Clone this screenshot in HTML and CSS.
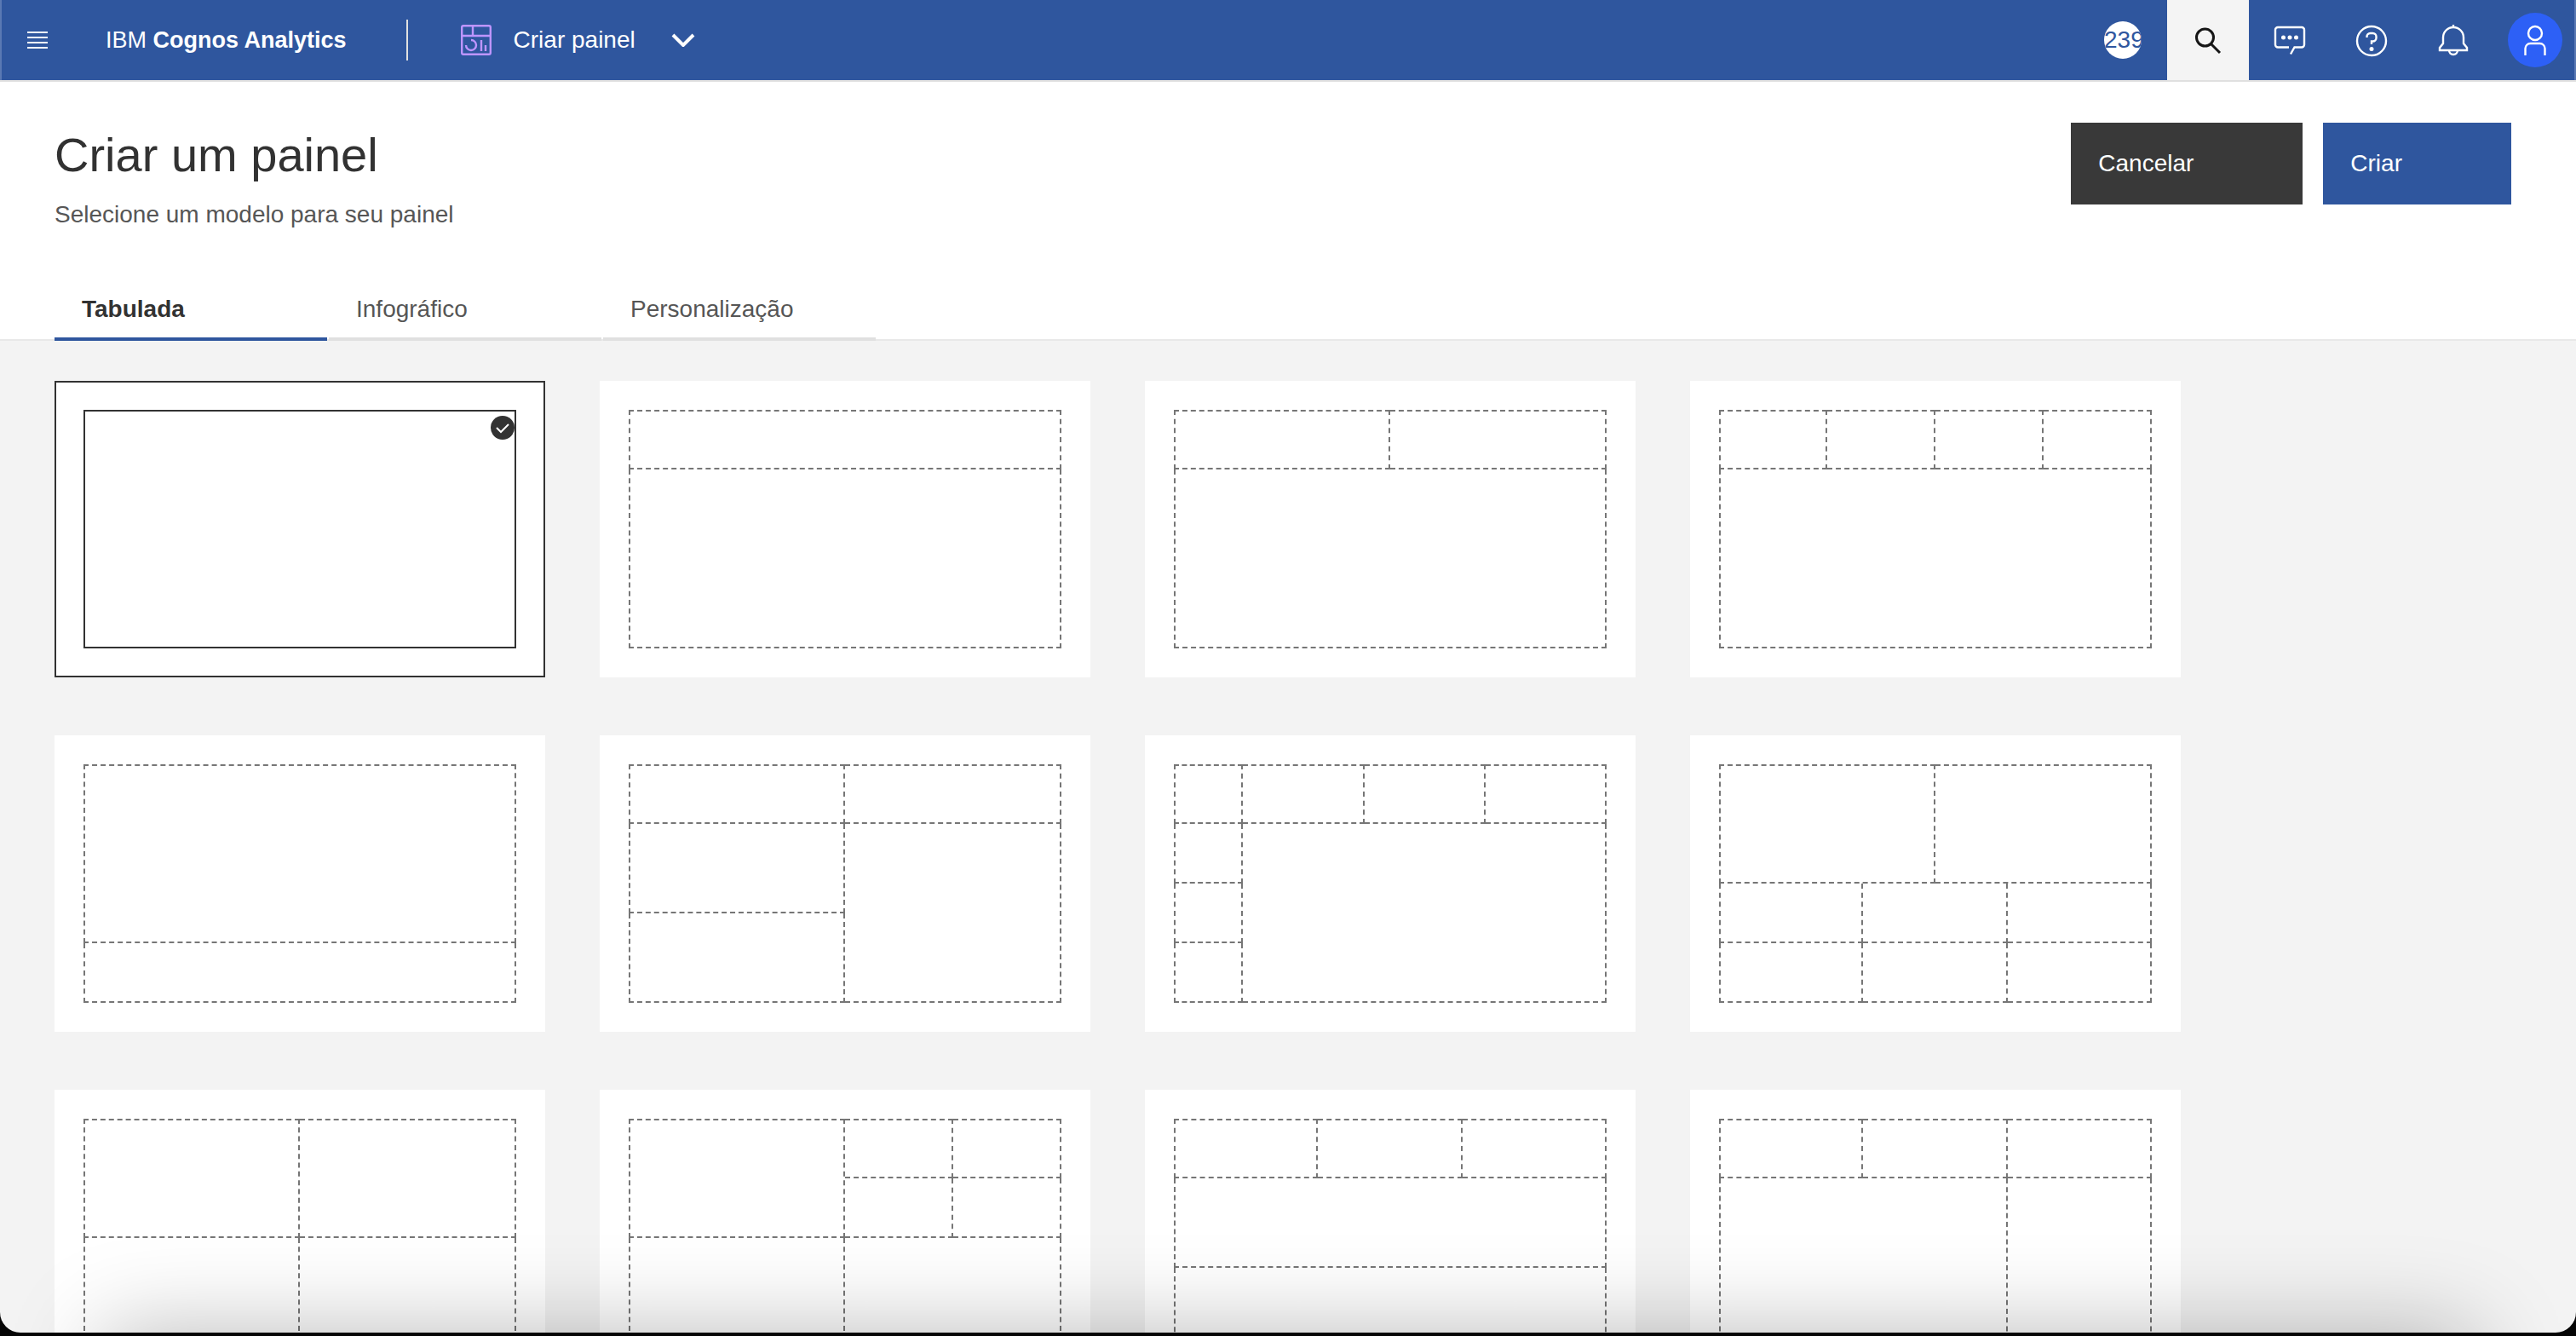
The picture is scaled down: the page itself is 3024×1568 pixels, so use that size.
FILE: index.html
```html
<!DOCTYPE html>
<html lang="pt-BR">
<head>
<meta charset="utf-8">
<title>IBM Cognos Analytics</title>
<link rel="stylesheet" href="styles.css">
</head>
<body>
<div class="window">
  <header class="topbar">
    <button class="menu-button" type="button" aria-label="Menu">
      <svg class="icon-menu" viewBox="0 0 24 20" aria-hidden="true"><path d="M0 1h24M0 7h24M0 13h24M0 19h24"/></svg>
    </button>
    <a class="brand" href="#">IBM <b>Cognos Analytics</b></a>
    <button class="switcher" type="button">
      <svg class="icon-dashboard" viewBox="0 0 36 36" stroke-width="2.4" aria-hidden="true"><path d="M3 1.200h30a1.800 1.800 0 0 1 1.800 1.800v30a1.800 1.800 0 0 1-1.800 1.800H3a1.800 1.800 0 0 1-1.800-1.800V3A1.800 1.800 0 0 1 3 1.200zM1 13h34M14 1v12M6 24a6 6 0 1 0 6-6M24 18v13M29 24v7"/></svg>
      <span>Criar painel</span>
      <svg class="icon-chevron" viewBox="0 0 28 16" aria-hidden="true"><path d="M2 2l12 12L26 2"/></svg>
    </button>
    <div class="actions">
      <span class="badge">239</span>
      <button class="action action-search" type="button" aria-label="Pesquisar">
        <svg class="icon" viewBox="0 0 40 40" stroke-width="3" aria-hidden="true"><circle cx="16.500" cy="17" r="10"/><path d="M23.500 24.500L34 35"/></svg>
      </button>
      <button class="action" type="button" aria-label="Comentários">
        <svg class="icon" viewBox="0 0 40 40" stroke-width="2.4" aria-hidden="true"><path d="M19 28.500H6a3 3 0 0 1-3-3V8a3 3 0 0 1 3-3h28a3 3 0 0 1 3 3v17.500a3 3 0 0 1-3 3h-8.500l-4.500 8"/><path class="dots" d="M12.500 17h0M20 17h0M27.500 17h0"/></svg>
      </button>
      <button class="action" type="button" aria-label="Ajuda">
        <svg class="icon" viewBox="0 0 40 40" stroke-width="2.4" aria-hidden="true"><circle cx="20" cy="21" r="17"/><path d="M14.500 17v-1a4 4 0 0 1 4-4h3a4 4 0 0 1 4 4v1.500a4 4 0 0 1-4 4H20V25"/><path class="dots" d="M20 30.500h0"/></svg>
      </button>
      <button class="action" type="button" aria-label="Notificações">
        <svg class="icon" viewBox="0 0 40 40" stroke-width="2.4" aria-hidden="true"><path d="M20 2v4M20 5a12 12 0 0 1 12 12v7l4 5v3H4v-3l4-5v-7A12 12 0 0 1 20 5zM15 32a5 5 0 0 0 10 0"/></svg>
      </button>
      <button class="action" type="button" aria-label="Conta">
        <span class="avatar"><svg class="icon" viewBox="0 0 40 40" stroke-width="2.4" aria-hidden="true"><circle cx="20" cy="12" r="8"/><path d="M8.500 38v-8a6 6 0 0 1 6-6h11a6 6 0 0 1 6 6v8"/></svg></span>
      </button>
    </div>
  </header>

  <section class="intro">
    <div class="intro-row">
      <div class="intro-text">
        <h1>Criar um painel</h1>
        <p>Selecione um modelo para seu painel</p>
      </div>
      <div class="buttons">
        <button class="button button-secondary" type="button">Cancelar</button>
        <button class="button button-primary" type="button">Criar</button>
      </div>
    </div>
    <div class="tabs" role="tablist">
      <button class="tab tab-active" type="button" role="tab" aria-selected="true">Tabulada</button>
      <button class="tab" type="button" role="tab" aria-selected="false">Infográfico</button>
      <button class="tab" type="button" role="tab" aria-selected="false">Personalização</button>
    </div>
  </section>

  <main class="templates">
    <label class="card">
      <input class="card-input" type="radio" name="template" aria-label="Modelo 1" checked>
      <span class="preview"><i class="c12 r8 top left"></i></span>
      <svg class="check" viewBox="0 0 28 28" aria-hidden="true"><circle cx="14" cy="14" r="14"/><path d="M7 14l5 5 9-9"/></svg>
    </label>
    <label class="card">
      <input class="card-input" type="radio" name="template" aria-label="Modelo 2">
      <span class="preview"><i class="c12 r2 top left"></i><i class="c12 r6 left"></i></span>
    </label>
    <label class="card">
      <input class="card-input" type="radio" name="template" aria-label="Modelo 3">
      <span class="preview"><i class="c6 r2 top left"></i><i class="c6 r2 top"></i><i class="c12 r6 left"></i></span>
    </label>
    <label class="card">
      <input class="card-input" type="radio" name="template" aria-label="Modelo 4">
      <span class="preview"><i class="c3 r2 top left"></i><i class="c3 r2 top"></i><i class="c3 r2 top"></i><i class="c3 r2 top"></i><i class="c12 r6 left"></i></span>
    </label>
    <label class="card">
      <input class="card-input" type="radio" name="template" aria-label="Modelo 5">
      <span class="preview"><i class="c12 r6 top left"></i><i class="c12 r2 left"></i></span>
    </label>
    <label class="card">
      <input class="card-input" type="radio" name="template" aria-label="Modelo 6">
      <span class="preview"><i class="c6 r2 top left"></i><i class="c6 r2 top"></i><i class="c6 r3 left"></i><i class="c6 r6"></i><i class="c6 r3 left"></i></span>
    </label>
    <label class="card">
      <input class="card-input" type="radio" name="template" aria-label="Modelo 7">
      <span class="preview preview-25"><i class="c4 r2 top left"></i><i class="c7 r2 top"></i><i class="c7 r2 top"></i><i class="c7 r2 top"></i><i class="c4 r2 left"></i><i class="c21 r6"></i><i class="c4 r2 left"></i><i class="c4 r2 left"></i></span>
    </label>
    <label class="card">
      <input class="card-input" type="radio" name="template" aria-label="Modelo 8">
      <span class="preview"><i class="c6 r4 top left"></i><i class="c6 r4 top"></i><i class="c4 r2 left"></i><i class="c4 r2"></i><i class="c4 r2"></i><i class="c4 r2 left"></i><i class="c4 r2"></i><i class="c4 r2"></i></span>
    </label>
    <label class="card">
      <input class="card-input" type="radio" name="template" aria-label="Modelo 9">
      <span class="preview"><i class="c6 r4 top left"></i><i class="c6 r4 top"></i><i class="c6 r4 left"></i><i class="c6 r4"></i></span>
    </label>
    <label class="card">
      <input class="card-input" type="radio" name="template" aria-label="Modelo 10">
      <span class="preview"><i class="c6 r4 top left"></i><i class="c3 r2 top"></i><i class="c3 r2 top"></i><i class="c3 r2"></i><i class="c3 r2"></i><i class="c6 r4 left"></i><i class="c6 r4"></i></span>
    </label>
    <label class="card">
      <input class="card-input" type="radio" name="template" aria-label="Modelo 11">
      <span class="preview"><i class="c4 r2 top left"></i><i class="c4 r2 top"></i><i class="c4 r2 top"></i><i class="c12 r3 left"></i><i class="c12 r3 left"></i></span>
    </label>
    <label class="card">
      <input class="card-input" type="radio" name="template" aria-label="Modelo 12">
      <span class="preview"><i class="c4 r2 top left"></i><i class="c4 r2 top"></i><i class="c4 r2 top"></i><i class="c8 r6 left"></i><i class="c4 r6"></i></span>
    </label>
  </main>
  <div class="dock-shadow" aria-hidden="true"></div>
</div>
</body>
</html>
```
FILE: styles.css
```css
* {
  box-sizing: border-box;
}

body {
  margin: 0;
  height: 100vh;
  padding-bottom: 4px;
  overflow: hidden;
  background: #050505;
  color: #565656;
  font: 28px/36px "Liberation Sans", Arial, sans-serif;
}

button {
  margin: 0;
  padding: 0;
  border: 0;
  background: none;
  color: inherit;
  font: inherit;
  text-align: left;
  cursor: pointer;
}

.window {
  position: relative;
  display: flex;
  flex-direction: column;
  height: 100%;
  overflow: hidden;
  border-radius: 0 0 24px 24px;
  background: #f3f3f3;
}

/* Top bar */
.topbar {
  display: flex;
  flex: none;
  align-items: center;
  height: 96px;
  border-bottom: 2px solid #e0e0e0;
  background: #2f569e;
  box-shadow: inset 2px 0 #5a79b3, inset -2px 0 #5a79b3;
  color: #fff;
}

.menu-button {
  display: flex;
  padding: 32px;
}

.icon-menu {
  width: 24px;
  height: 20px;
  stroke: #fff;
  stroke-width: 2;
}

.brand {
  margin-left: 36px;
  color: inherit;
  font-size: 27px;
  text-decoration: none;
}

.switcher {
  display: flex;
  align-items: center;
  gap: 26px;
  height: 48px;
  margin-left: 70px;
  padding-left: 62px;
  border-left: 2px solid #e0e0e0;
}

.icon-dashboard {
  width: 36px;
  height: 36px;
  fill: none;
  stroke: #be95ff;
}

.icon-chevron {
  width: 28px;
  height: 16px;
  margin-left: 16px;
  fill: none;
  stroke: #fff;
  stroke-width: 4;
}

.actions {
  display: flex;
  align-items: center;
  margin-left: auto;
}

.badge {
  width: 44px;
  height: 44px;
  margin-right: 30px;
  overflow: hidden;
  border-radius: 50%;
  background: #fff;
  color: #2f569e;
  line-height: 44px;
}

.action {
  display: flex;
  align-items: center;
  justify-content: center;
  width: 96px;
  height: 94px;
}

.action-search {
  background: #f4f4f4;
  color: #161616;
}

.icon {
  width: 40px;
  height: 40px;
  fill: none;
  stroke: currentColor;
}

.icon .dots {
  stroke-width: 5;
  stroke-linecap: round;
}

.avatar {
  display: flex;
  align-items: center;
  justify-content: center;
  width: 64px;
  height: 64px;
  border-radius: 50%;
  background: #2d60f6;
}

/* Page heading */
.intro {
  flex: none;
  padding: 48px 76px 0 64px;
  border-bottom: 2px solid #e8e8e8;
  background: #fff;
}

.intro-row {
  display: flex;
  align-items: flex-start;
  justify-content: space-between;
}

h1 {
  margin: 0;
  color: #323232;
  font-size: 56px;
  font-weight: 400;
  line-height: 76px;
}

.intro-text p {
  margin: 14px 0 0;
}

.buttons {
  display: flex;
  gap: 24px;
}

.button {
  height: 96px;
  padding: 0 128px 0 32px;
  color: #fff;
}

.button-secondary {
  background: #393939;
}

.button-primary {
  background: #2f569e;
}

.tabs {
  display: flex;
  gap: 2px;
  margin: 64px 0 -2px;
}

.tab {
  width: 320px;
  height: 66px;
  padding: 0 32px 4px;
  border-bottom: 4px solid #e0e0e0;
}

.tab-active {
  border-color: #2f569e;
  color: #323232;
  font-weight: 700;
}

/* Template cards */
.templates {
  display: grid;
  flex: 1;
  grid-template-columns: repeat(auto-fill, 576px);
  grid-auto-rows: 348px;
  gap: 68px 64px;
  max-width: 2688px;
  min-height: 0;
  padding: 47px 64px 0;
}

.card {
  position: relative;
  padding: 34px;
  background: #fff;
  cursor: pointer;
}

.card-input {
  position: absolute;
  opacity: 0;
}

.card:has(:checked) {
  outline: 2px solid #323232;
  outline-offset: -2px;
}

.preview {
  display: grid;
  grid-template-columns: repeat(12, minmax(0, 1fr));
  grid-template-rows: repeat(8, minmax(0, 1fr));
  grid-auto-flow: dense;
  height: 100%;
}

.preview-25 {
  grid-template-columns: repeat(25, minmax(0, 1fr));
}

.preview i {
  border: 0 dashed #767676;
  border-right-width: 2px;
  border-bottom-width: 2px;
}

.preview .top { border-top-width: 2px; }
.preview .left { border-left-width: 2px; }

.card:has(:checked) .preview i {
  border-style: solid;
  border-color: #323232;
}

.c3 { grid-column: span 3; }
.c4 { grid-column: span 4; }
.c6 { grid-column: span 6; }
.c7 { grid-column: span 7; }
.c8 { grid-column: span 8; }
.c12 { grid-column: span 12; }
.c21 { grid-column: span 21; }
.r2 { grid-row: span 2; }
.r3 { grid-row: span 3; }
.r4 { grid-row: span 4; }
.r6 { grid-row: span 6; }
.r8 { grid-row: span 8; }

.check {
  position: absolute;
  top: 41px;
  right: 36px;
  width: 28px;
  height: 28px;
  fill: #323232;
}

.check path {
  fill: none;
  stroke: #fff;
  stroke-width: 2;
}

/* Shade cast on the lower edge of the window */
.dock-shadow {
  position: absolute;
  top: 100%;
  right: 120px;
  left: 120px;
  height: 200px;
  box-shadow: 0 0 110px rgba(0, 0, 0, 0.28);
  pointer-events: none;
}
```
